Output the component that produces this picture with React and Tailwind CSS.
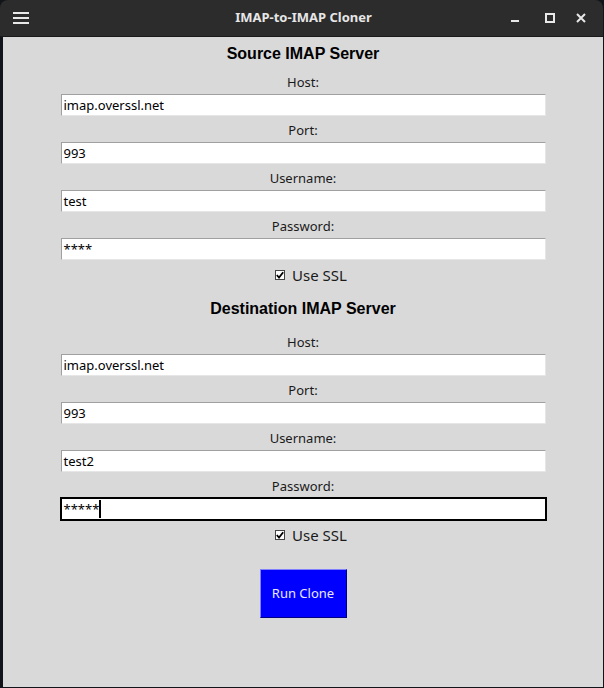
import React, { useState } from "react";

const Field = ({ label, value, focused, type = "text" }) => (
  <>
    <div className="h-[24px] pt-[3px] flex items-center justify-center text-[13px] text-[#1a1a1a]">
      {label}
    </div>
    <div
      className={`w-[487px] h-[24px] mx-auto p-px ${
        focused ? "bg-black" : "bg-transparent"
      }`}
    >
      <div
        className={`h-full bg-white flex items-center ${
          focused
            ? "border border-black"
            : "border-t border-l border-[#a0a0a0] border-r-[#e6e6e6] border-b-[#e6e6e6] border-r border-b"
        }`}
      >
        <span className="pl-[2px] text-[13px] text-black leading-none">
          {type === "password" ? "*".repeat(value.length) : value}
        </span>
        {focused && <span className="w-[2px] h-[18px] bg-black" />}
      </div>
    </div>
  </>
);

const Check = ({ checked }) => (
  <div className="h-[26px] pt-[2px] pl-[16px] flex items-center justify-center gap-[7px] text-[15px] text-[#1a1a1a]">
    <span className="w-[10px] h-[10px] border border-[#444] bg-white flex items-center justify-center">
      {checked && (
        <svg width="8" height="8" viewBox="0 0 8 8">
          <path d="M0.8 4 L3 6.5 L7.2 1.2" stroke="black" strokeWidth="1.8" fill="none" />
        </svg>
      )}
    </span>
    Use SSL
  </div>
);

export default function App() {
  const [src] = useState({ host: "imap.overssl.net", port: "993", user: "test", pass: "test" });
  const [dst] = useState({ host: "imap.overssl.net", port: "993", user: "test2", pass: "test2" });

  return (
    <div
      className="w-[604px] h-[688px] bg-[#111418] pl-[3px] pr-px pb-px flex flex-col"
      style={{ fontFamily: "'Noto Sans', 'Open Sans', sans-serif" }}
    >
      <div className="h-[37px] -ml-[3px] bg-[#2c2c2c] rounded-t-[8px] grid grid-cols-[1fr_auto_1fr] items-center border-b border-[#1a1a1a]">
        <div className="pl-[13px] flex">
          <svg width="16" height="12" viewBox="0 0 16 12">
            <rect x="0" y="0" width="16" height="2" fill="#e8e8e8" />
            <rect x="0" y="5" width="16" height="2" fill="#e8e8e8" />
            <rect x="0" y="10" width="16" height="2" fill="#e8e8e8" />
          </svg>
        </div>
        <div className="text-center text-[13px] font-bold text-[#e6e6e6] pl-[4px]">
          IMAP-to-IMAP Cloner
        </div>
        <div className="flex items-center justify-end pr-[17px]">
          <svg width="10" height="10" viewBox="0 0 10 10">
            <rect x="1" y="7" width="8" height="2" fill="#e8e8e8" />
          </svg>
          <svg width="10" height="10" viewBox="0 0 10 10" className="ml-[25px]">
            <rect x="1" y="1" width="8" height="8" fill="none" stroke="#e8e8e8" strokeWidth="2" />
          </svg>
          <svg width="10" height="10" viewBox="0 0 10 10" className="ml-[21px]">
            <path d="M1 1 L9 9 M9 1 L1 9" stroke="#e8e8e8" strokeWidth="2" />
          </svg>
        </div>
      </div>

      <div className="flex-1 bg-[#d9d9d9] flex flex-col">
        <div
          className="h-[32px] pt-[2px] flex items-center justify-center text-[16px] font-bold text-black"
          style={{ fontFamily: "'Liberation Sans', Arial, sans-serif" }}
        >
          Source IMAP Server
        </div>
        <Field label="Host:" value={src.host} />
        <Field label="Port:" value={src.port} />
        <Field label="Username:" value={src.user} />
        <Field label="Password:" value={src.pass} type="password" />
        <Check checked />

        <div
          className="h-[42px] pt-[2px] flex items-center justify-center text-[16px] font-bold text-black"
          style={{ fontFamily: "'Liberation Sans', Arial, sans-serif" }}
        >
          Destination IMAP Server
        </div>
        <Field label="Host:" value={dst.host} />
        <Field label="Port:" value={dst.port} />
        <Field label="Username:" value={dst.user} />
        <Field label="Password:" value={dst.pass} type="password" focused />
        <Check checked />

        <div className="flex justify-center mt-[22px]">
          <button className="w-[87px] h-[49px] bg-[#0000ff] text-[13px] text-[#e8e8ff] border border-t-[#8080ff] border-l-[#8080ff] border-r-[#000080] border-b-[#000080]">
            Run Clone
          </button>
        </div>
      </div>
    </div>
  );
}
